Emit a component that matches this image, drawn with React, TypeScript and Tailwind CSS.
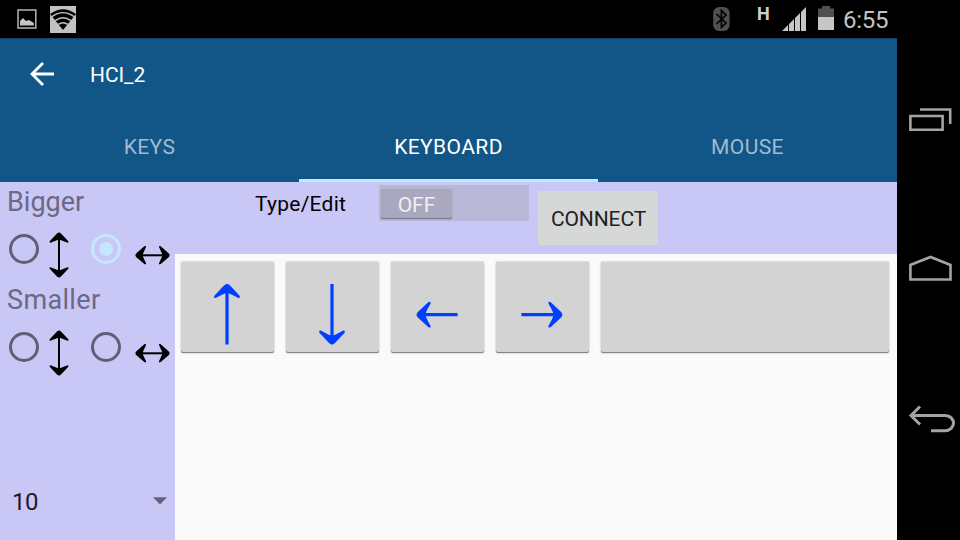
import React from "react";

type ArrowProps = { className?: string };

const HEAD_V = "M0 0C1.2 0 2 .6 3 1.5L12.4 11.6C13.4 12.9 12.9 14.4 11.3 14C8.5 12.6 4.5 10 1.6 9.2H-1.6C-4.5 10-8.5 12.6-11.3 14C-12.9 14.4-13.4 12.9-12.4 11.6L-3 1.5C-2 .6-1.2 0 0 0Z";

function KeyArrow({ kind }: { kind: "up" | "down" | "left" | "right" }) {
  const up = kind === "up" || kind === "down";
  const length = up ? 60.5 : 41;
  const turn = { up: 0, down: 180, left: -90, right: 90 }[kind];
  const start = {
    up: "translate(46 22)",
    down: "translate(46 82.5)",
    left: "translate(25.6 52.7)",
    right: "translate(66.4 52.7)",
  }[kind];
  return (
    <svg className="block h-[91px] w-[93px]" viewBox="0 0 93 91" fill="#003fff">
      <g transform={`${start} rotate(${turn})`}>
        <path d={HEAD_V} />
        <path d={`M-1.6 6H1.6V${length}H-1.6Z`} />
      </g>
    </svg>
  );
}

function Key({ children, wide }: { children?: React.ReactNode; wide?: boolean }) {
  return (
    <button
      className={`h-[91px] shrink-0 rounded-[2px] border-t border-t-[#dedede] bg-[#d3d3d3] shadow-[0_1px_0_#858585,0_1px_2px_#aaaaaa] ${
        wide ? "w-[288px]" : "w-[93px]"
      }`}
    >
      {children}
    </button>
  );
}

function VerticalArrow({ className = "" }: ArrowProps) {
  return (
    <svg className={`h-[46px] w-5 shrink-0 ${className}`} viewBox="0 0 20 46">
      <path d="M10 5V41" stroke="#000" strokeWidth="2" />
      <path d="M10 .5Q11 .5 12 1.5L19.3 9.3Q20 10.8 18.5 10.8L11.5 8H8.5L1.5 10.8Q0 10.8.7 9.3L8 1.5Q9 .5 10 .5ZM10 45.5Q11 45.5 12 44.5L19.3 36.7Q20 35.2 18.5 35.2L11.5 38H8.5L1.5 35.2Q0 35.2.7 36.7L8 44.5Q9 45.5 10 45.5Z" />
    </svg>
  );
}

function HorizontalArrow({ className = "" }: ArrowProps) {
  return (
    <svg className={`h-5 w-[35px] shrink-0 ${className}`} viewBox="0 0 35 20">
      <path d="M5 10.3H30" stroke="#000" strokeWidth="2" />
      <path d="M.4 10.3Q.4 9.3 1.4 8.3L9.3 1.2Q11.3.3 11 2.1L8 8.8V11.8L11 18.2Q11.3 20 9.3 19.1L1.4 12.3Q.4 11.3.4 10.3ZM34.6 10.3Q34.6 9.3 33.6 8.3L25.7 1.2Q23.7.3 24 2.1L27 8.8V11.8L24 18.2Q23.7 20 25.7 19.1L33.6 12.3Q34.6 11.3 34.6 10.3Z" />
    </svg>
  );
}

function Radio({ checked = false }: { checked?: boolean }) {
  return (
    <span
      className={`flex size-[30px] shrink-0 items-center justify-center rounded-full border-[3px] ${
        checked ? "border-[#c4e7ff]" : "border-[#615f76]"
      }`}
    >
      {checked && <span className="size-[14px] rounded-full bg-[#c4e7ff]" />}
    </span>
  );
}

function SizeGroup({ label, checked }: { label: string; checked?: boolean }) {
  return (
    <div className="h-[98px]">
      <div className={`h-10 pl-[7px] text-[27px] leading-10 text-[#6b6983] ${checked ? "" : "tracking-[0.35px]"}`}>
        {label}
      </div>
      <div className="flex items-start pl-[9px]">
        <span className="pt-3">
          <Radio />
        </span>
        <VerticalArrow className="mt-[10px] ml-[10px]" />
        <span className="ml-[22px] pt-3">
          <Radio checked={checked} />
        </span>
        <HorizontalArrow className="mt-[23px] ml-[14px]" />
      </div>
    </div>
  );
}

function StatusBar() {
  return (
    <header className="flex h-[38px] shrink-0 items-start bg-black">
      <svg className="mt-[9px] ml-[17px] h-5 w-5" viewBox="0 0 20 20">
        <rect x="1" y="1" width="17.8" height="18" fill="none" stroke="#aaa" strokeWidth="1.6" />
        <path d="M3 16.5V12L6 9L9 12L12 11L16.8 14V16.5Z" fill="#c4c4c4" />
      </svg>
      <svg className="mt-[6px] ml-[13px] h-[27px] w-[26px]" viewBox="0 0 26 27">
        <path d="M0 0H26V27H0Z" fill="#c2c2c2" />
        <path d="M0 8Q13-1.5 26 8L13 24Z" fill="#000" />
        <g fill="none" stroke="#c2c2c2" strokeWidth="1.4">
          <path d="M2 10.6Q13 2.6 24 10.6" />
          <path d="M5.2 14.6Q13 8.9 20.8 14.6" />
          <path d="M8.3 18.4Q13 15 17.7 18.4" />
        </g>
      </svg>
      <svg className="mt-[7px] ml-[637px] h-6 w-[17px]" viewBox="0 0 17 24">
        <rect x=".2" width="16.4" height="24" rx="6" fill="#505050" />
        <path d="M3.4 7L13 16L8.4 20.3V3.5L13 8L3.4 17" fill="none" stroke="#000" strokeWidth="1.7" />
      </svg>
      <span className="mt-[5px] ml-[27px] w-[13px] text-[18px] leading-[18px] font-bold text-[#cfcfcf]">H</span>
      <svg className="mt-[7px] ml-3 h-6 w-[24px]" viewBox="0 0 24 24" fill="#c6c6c6">
        <path d="M0 24L6 18V24ZM7 24V17L12 12V24ZM13 24V11L18 6V24ZM19 24V5L24 0V24Z" />
      </svg>
      <svg className="mt-[6px] ml-3 h-6 w-4" viewBox="0 0 16 24">
        <path d="M0 2.5H4V0H12V2.5H16V11H0Z" fill="#505050" />
        <path d="M0 11H16V24H0Z" fill="#c6c6c6" />
      </svg>
      <span className="mt-[6px] ml-[9px] text-[24px] leading-[28px] tracking-[-0.3px] text-[#c3c3c3]">6:55</span>
    </header>
  );
}

function AppBar() {
  return (
    <div className="flex h-36 shrink-0 flex-col border-t border-[#0d4468] bg-[#125688]">
      <div className="flex h-[71px] items-start">
        <svg className="mt-[23px] ml-[30px] h-6 w-6" viewBox="0 0 24 24" fill="none" stroke="#fff" strokeWidth="2.8">
          <path d="M24 12H2M13 1L2 12L13 23" />
        </svg>
        <h1 className="mt-[21px] ml-9 text-[21px] leading-[31px] tracking-[-0.1px] text-white">HCI_2</h1>
      </div>
      <nav className="grid h-[72px] grid-cols-3 text-center text-[21px] leading-[30px] tracking-[0.4px] text-[#a0bbcf]">
        <span className="pt-[22px]">KEYS</span>
        <span className="border-b-[3px] border-[#c4e7ff] pt-[22px] text-white">KEYBOARD</span>
        <span className="pt-[22px]">MOUSE</span>
      </nav>
    </div>
  );
}

export default function App() {
  return (
    <div className="flex h-[540px] w-[960px] flex-col overflow-hidden bg-black font-['Roboto',sans-serif]">
      <StatusBar />
      <div className="flex flex-1">
        <main className="flex w-[897px] flex-col">
          <AppBar />
          <div className="flex flex-1 bg-[#c9c7f5]">
            <aside className="flex w-[175px] shrink-0 flex-col">
              <SizeGroup label="Bigger" checked />
              <SizeGroup label="Smaller" />
              <div className="mt-[104px] flex h-10 items-center justify-between pr-2 pl-3 text-[24px] text-[#1d1c22]">
                <span className="tracking-[-0.4px]">10</span>
                <svg className="mb-[2px] h-2 w-[14px]" viewBox="0 0 14 8">
                  <path d="M0 .2H14L7 7.6Z" fill="#656379" />
                </svg>
              </div>
            </aside>
            <section className="flex flex-1 flex-col">
              <div className="flex h-[72px] items-start">
                <span className="mt-[7px] ml-20 w-[124px] text-[21px] leading-[30px] tracking-[0.25px] text-black">Type/Edit</span>
                <div className="mt-[3px] h-9 w-[150px] bg-[#bab8d8] pt-[3px] pl-[2px]">
                  <div className="h-[30px] w-[71px] rounded-[2px] border-t border-[#b8b6c9] bg-[#aaa8bf] text-center text-[21px] leading-[32px] text-[#f0eff5] shadow-[0_1px_0_#77758b,0_1px_2px_#9997ad]">
                    OFF
                  </div>
                </div>
                <button className="mt-[9px] ml-[9px] h-[54px] w-[120px] rounded-[3px] bg-[#d6d7d7] pt-[3px] pl-px text-[21px] tracking-[-0.1px] text-[#202121]">
                  CONNECT
                </button>
              </div>
              <div className="flex flex-1 items-start gap-3 bg-[#fafafa] pt-[7px] pl-[6px]">
                <Key><KeyArrow kind="up" /></Key>
                <Key><KeyArrow kind="down" /></Key>
                <Key><KeyArrow kind="left" /></Key>
                <Key><KeyArrow kind="right" /></Key>
                <Key wide />
              </div>
            </section>
          </div>
        </main>
        <nav className="flex flex-1 flex-col items-start">
          <svg className="mt-[70px] ml-3 h-6 w-[43px]" viewBox="0 0 43 24" fill="none" stroke="#a3a3a3" strokeWidth="2.6">
            <path d="M1.4 8H33.6V21.7H1.4ZM11 1.5H41.2V16" />
          </svg>
          <svg className="mt-[123px] ml-3 h-[27px] w-[43px]" viewBox="0 0 43 27" fill="none" stroke="#a3a3a3" strokeWidth="2.6">
            <path d="M1.4 24.5V10L21.5 2L41.5 10V24.5Z" />
          </svg>
          <svg className="mt-[123px] ml-[11px] h-7 w-[48px]" viewBox="0 0 48 28" fill="none" stroke="#a3a3a3" strokeWidth="3">
            <path d="M12 1.5L3 10.5L12 19.5M3 10.5H36.5C48.5 10.5 48.5 25.7 36.5 25.7H23" />
          </svg>
        </nav>
      </div>
    </div>
  );
}
